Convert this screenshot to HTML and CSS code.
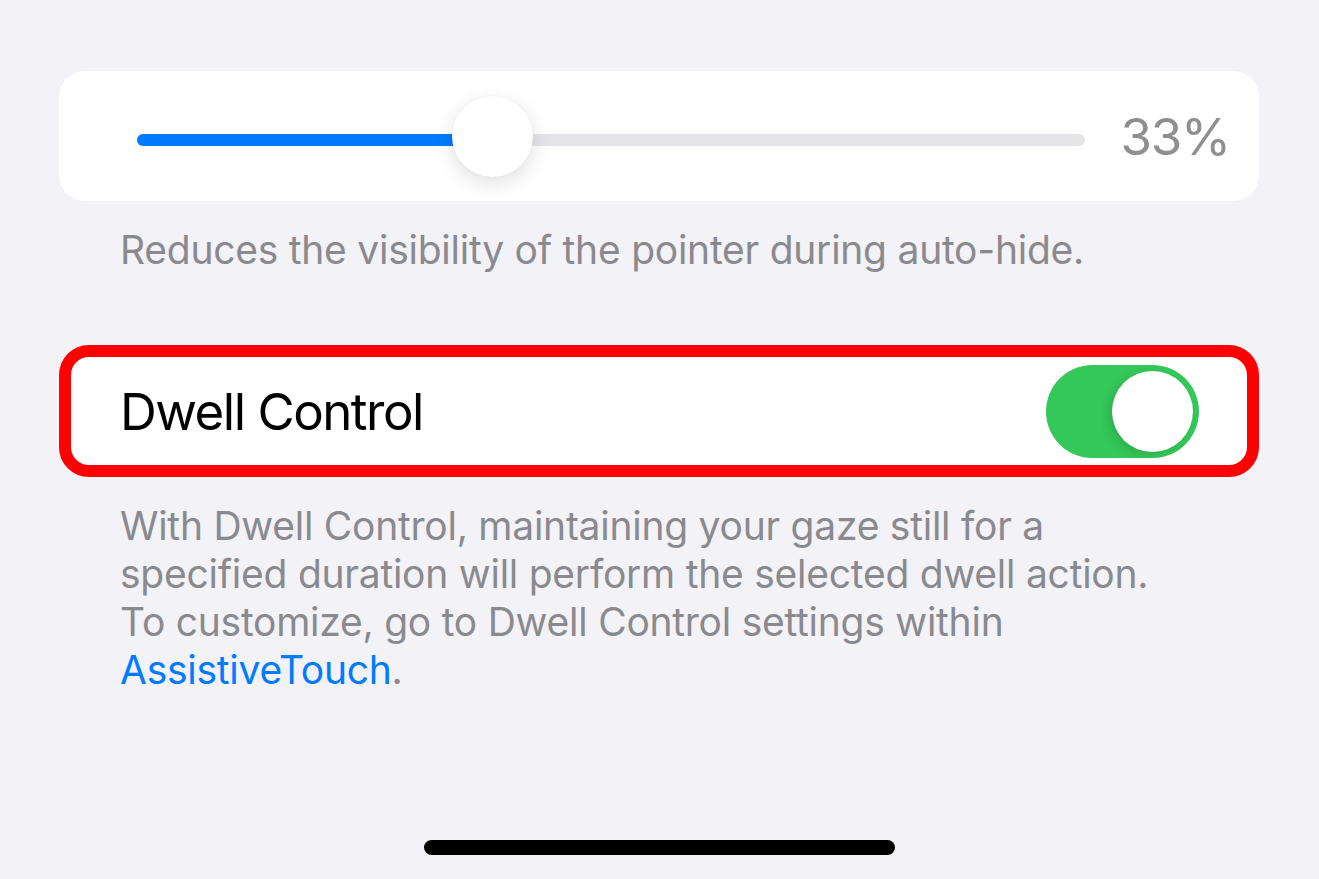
FILE: index.html
```html
<!DOCTYPE html>
<html>
<head>
<title>Pointer Control</title>
<link rel="stylesheet" href="styles.css">
</head>
<body>

  <div class="screen">
    <div class="group">
      <div class="cell slider-cell">
        <div class="slider">
          <div class="slider-fill" style="width: 355px"></div>
          <div class="slider-thumb" style="left: 315px"></div>
        </div>
        <span class="slider-value">33%</span>
      </div>
      <p class="footnote">Reduces the visibility of the pointer during auto-hide.</p>
    </div>

    <div class="group">
      <div class="cell toggle-cell highlighted">
        <span class="cell-label">Dwell Control</span>
        <div class="switch on">
          <div class="switch-knob"></div>
        </div>
      </div>
      <p class="footnote">
        With Dwell Control, maintaining your gaze still for a<br>
        specified duration will perform the selected dwell action.<br>
        To customize, go to Dwell Control settings within<br>
        <a class="link" href="#">AssistiveTouch</a>.
      </p>
    </div>

    <div class="home-indicator"></div>
  </div>

</body>
</html>
```

FILE: styles.css
```css
:root {
  --grouped-bg: #f2f2f7;
  --cell-bg: #ffffff;
  --label: #000000;
  --secondary-label: #8a8a8e;
  --value-label: #8e8e93;
  --tint: #007aff;
  --track: #e3e3e8;
  --switch-on: #34c759;
  --highlight: #ff0000;
}

html, body {
  margin: 0;
  padding: 0;
}

body {
  font-family: 'Inter', 'Noto Sans', sans-serif;
  background-color: var(--grouped-bg);
  width: 1319px;
  height: 879px;
  overflow: hidden;
}

.screen {
  display: flex;
  flex-direction: column;
  height: 879px;
  padding: 71px 60px 0 59px;
  box-sizing: border-box;
}

.group {
  display: flex;
  flex-direction: column;
}

.group + .group {
  margin-top: 71px;
}

.cell {
  background-color: var(--cell-bg);
  border-radius: 26px;
  height: 130px;
  display: flex;
  align-items: center;
  box-sizing: border-box;
}

/* Slider row */
.slider-cell {
  padding: 0 29px 0 78px;
  gap: 36px;
}

.slider {
  position: relative;
  flex: 1;
  height: 12px;
  border-radius: 6px;
  background-color: var(--track);
  margin-top: 8px;
}

.slider-fill {
  height: 100%;
  border-radius: 6px 0 0 6px;
  background-color: var(--tint);
}

.slider-thumb {
  position: absolute;
  top: 50%;
  width: 81px;
  height: 81px;
  margin-top: -44px;
  border-radius: 50%;
  background-color: #fff;
  box-shadow: 0 6px 20px rgba(0, 0, 0, 0.13), 0 0 2px rgba(0, 0, 0, 0.06);
}

.slider-value {
  font-size: 51px;
  color: var(--value-label);
  letter-spacing: -1.2px;
  line-height: 1;
}

.footnote {
  margin: 25px 0 0 0;
  padding-left: 61px;
  font-size: 39px;
  line-height: 48px;
  color: var(--secondary-label);
  letter-spacing: -0.25px;
}

.link {
  color: var(--tint);
  text-decoration: none;
}

/* Toggle row */
.toggle-cell {
  height: 132px;
  justify-content: space-between;
  padding: 0 48px 0 49px;
  border-radius: 30px;
}

.highlighted {
  border: 12px solid var(--highlight);
}

.cell-label {
  font-size: 51px;
  color: var(--label);
  letter-spacing: -1.5px;
}

.switch {
  width: 153px;
  height: 93px;
  border-radius: 47px;
  background-color: #e9e9eb;
  position: relative;
  box-sizing: border-box;
  padding: 6px;
  display: flex;
}

.switch.on {
  background-color: var(--switch-on);
  justify-content: flex-end;
}

.switch-knob {
  width: 81px;
  height: 81px;
  border-radius: 50%;
  background-color: #fff;
  box-shadow: -4px 3px 10px rgba(0, 0, 0, 0.12), 0 0 1px rgba(0, 0, 0, 0.08);
}

.home-indicator {
  margin: auto auto 24px auto;
  width: 471px;
  height: 15px;
  border-radius: 8px;
  background-color: #000;
}
```
